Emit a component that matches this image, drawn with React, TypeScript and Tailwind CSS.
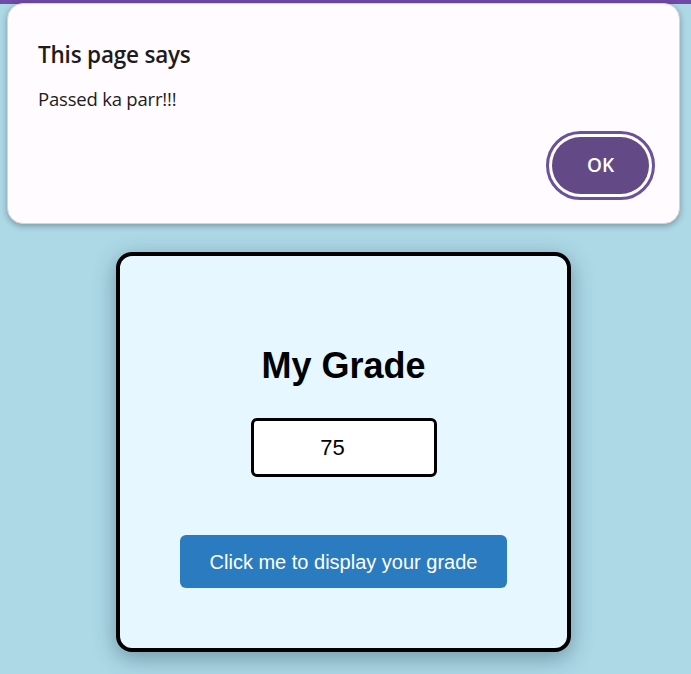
const App = () => {
  return (
    <div className="relative min-h-[674px] bg-[#add8e6] font-['Liberation_Sans',Arial,sans-serif]">
      <div className="h-[4px] bg-[#6f4aa6]" />

      <div className="flex justify-center pt-[248px] pb-6 pr-[4px]">
        <div className="w-[455px] rounded-[16px] border-4 border-black bg-[#e6f7ff] shadow-[0_6px_22px_rgba(40,70,90,0.45)] flex flex-col items-center pt-[90px] pb-[60px]">
          <h1 className="text-[36px] leading-[40px] font-bold text-black">My Grade</h1>
          <input
            type="text"
            defaultValue="75"
            className="mt-[32px] w-[186px] h-[59px] rounded-[6px] border-[3px] border-black bg-white text-center text-[22px] text-black pl-2 pr-[30px] outline-none"
          />
          <button className="mt-[58px] w-[327px] h-[53px] rounded-[6px] bg-[#2a7bbf] text-white text-[20px]">
            Click me to display your grade
          </button>
        </div>
      </div>

      {/* alert dialog over the page */}
      <div className="absolute left-[7px] top-[3px] w-[673px] h-[221px] rounded-[16px] bg-[#fffbfe] shadow-[0_2px_6px_rgba(0,0,0,0.3)] border border-[#d8d2dc] font-['Open_Sans',sans-serif] px-[30px] pt-[36px]">
        <div className="text-[22.5px] leading-[30px] font-semibold text-[#1d1b20] tracking-[-0.2px]">This page says</div>
        <div className="mt-[17px] text-[18.5px] leading-[24px] text-[#1d1b20] tracking-[-0.2px]">Passed ka parr!!!</div>
        <div className="flex justify-end mt-[20px]">
          <div className="mr-[-6px] rounded-full border-[3px] border-[#6b509c] p-[3px] bg-white">
            <button className="w-[97px] h-[57px] rounded-full bg-[#634a86] text-white text-[19px] font-semibold">
              OK
            </button>
          </div>
        </div>
      </div>
    </div>
  );
};

export default App;
